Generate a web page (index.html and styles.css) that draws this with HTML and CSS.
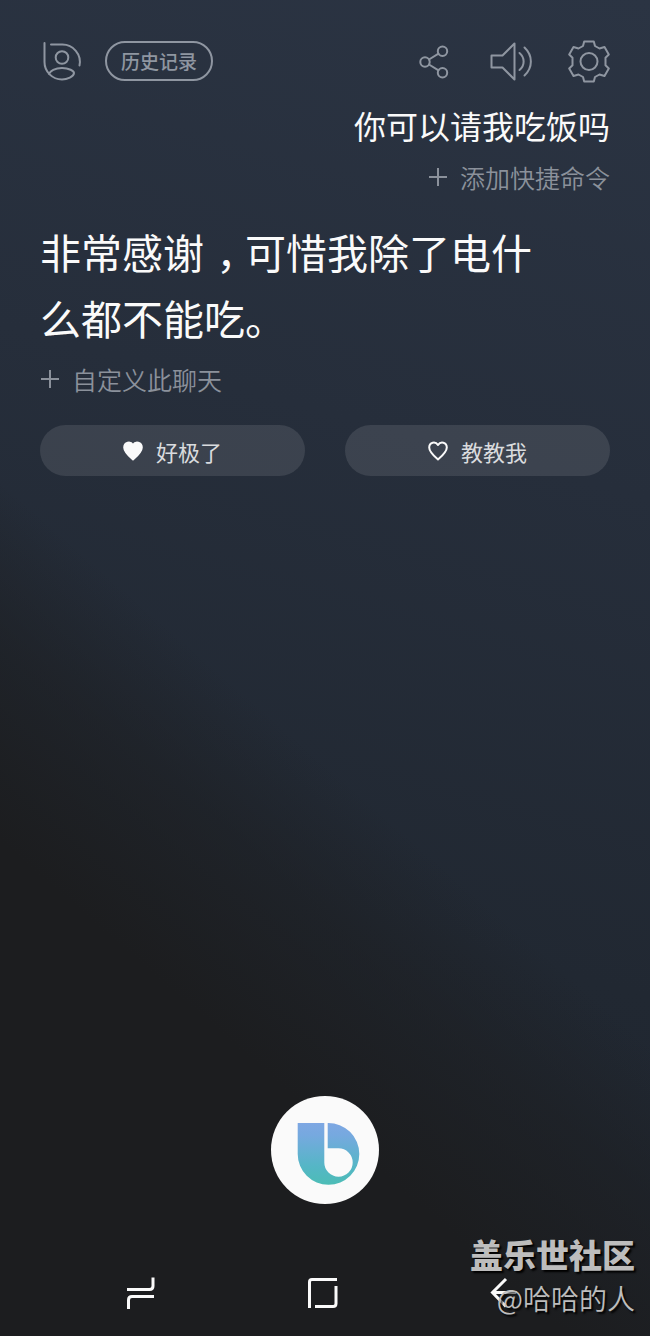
FILE: index.html
```
<!DOCTYPE html>
<html lang="zh-CN">
<head>
    <meta charset="UTF-8">
    <meta name="viewport" content="width=device-width, initial-scale=1.0">
    <title>Bixby</title>
    <link rel="stylesheet" href="styles.css">
</head>
<body>
    <div id="container">
        <header class="topBar">
            <button class="iconBtn" type="button" aria-label="个人资料">
                <svg class="icon" viewBox="0 0 44 44">
                    <path d="M4.5 4v19a17.5 17.5 0 0 0 17.5 17.5c5 0 12-3 12-6.500C34 32 29 29 22 29s-12 3-13 6"/>
                    <path d="M11 5.500h11A17.500 17.500 0 0 1 39.500 26.500"/>
                    <circle cx="22" cy="18.500" r="6.300"/>
                </svg>
            </button>
            <button class="historyBtn" type="button">历史记录</button>
            <div class="tools">
                <button class="iconBtn" type="button" aria-label="分享">
                    <svg class="icon" viewBox="0 0 44 44">
                        <circle cx="15" cy="23" r="4.700"/>
                        <circle cx="32.500" cy="12.200" r="4.700"/>
                        <circle cx="32.500" cy="33.800" r="4.700"/>
                        <path d="M19 20.500l9.500-5.800M19 25.500l9.500 5.800"/>
                    </svg>
                </button>
                <button class="iconBtn" type="button" aria-label="声音">
                    <svg class="icon" viewBox="0 0 44 44">
                        <path d="M3.500 16.500h11L26.500 4.500v36L14.500 28.500h-11z"/>
                        <path d="M31.500 14c5.500 4.500 5.500 12.500 0 17M36.500 8.500c8.500 8 8.500 20 0 28"/>
                    </svg>
                </button>
                <button class="iconBtn" type="button" aria-label="设置">
                    <svg class="icon" viewBox="-23 -22.500 44 44">
                        <path d="M-4.800-20H4.800L6-15.500L10.500-13L15.500-14.500L19.800-7L16.500-3.800V3.800L19.800 7L15.500 14.500L10.500 13L6 15.500L4.800 20H-4.800L-6 15.500L-10.500 13L-15.500 14.500L-19.800 7L-16.500 3.800V-3.800L-19.800-7L-15.500-14.500L-10.500-13L-6-15.500Z"/>
                        <circle r="8.500"/>
                    </svg>
                </button>
            </div>
        </header>

        <main class="chat">
            <p class="question">你可以请我吃饭吗</p>
            <button class="hint hintRight" type="button">
                <svg class="plus" viewBox="0 0 20 20"><path d="M1 10h18M10 1v18"/></svg>
                添加快捷命令
            </button>
            <p class="answer">非常感谢<span class="comma">，</span>可惜我除了电什么都不能吃。</p>
            <button class="hint" type="button">
                <svg class="plus" viewBox="0 0 20 20"><path d="M1 10h18M10 1v18"/></svg>
                自定义此聊天
            </button>
            <div class="feedback">
                <button class="feedbackBtn" type="button">
                    <svg class="heart filled" viewBox="0 0 20 20"><path d="M10 18.500C6 15 1.200 11 1.200 6.500C1.200 1 7.500 0 10 4C12.500 0 18.800 1 18.800 6.500C18.800 11 14 15 10 18.500z"/></svg>
                    好极了
                </button>
                <button class="feedbackBtn" type="button">
                    <svg class="heart" viewBox="0 0 20 20"><path d="M10 18.500C6 15 1.200 11 1.200 6.500C1.200 1 7.500 0 10 4C12.500 0 18.800 1 18.800 6.500C18.800 11 14 15 10 18.500z"/></svg>
                    教教我
                </button>
            </div>
        </main>

        <button class="bixbyBtn" type="button" aria-label="Bixby">
            <svg viewBox="0 0 108 108">
                <defs>
                    <linearGradient id="bixbyFill" x1="0" y1="0" x2="0" y2="1">
                        <stop offset="0" stop-color="#7ea7e3"/>
                        <stop offset="0.200" stop-color="#76a9df"/>
                        <stop offset="0.700" stop-color="#55b6c6"/>
                        <stop offset="1" stop-color="#4cbdb6"/>
                    </linearGradient>
                </defs>
                <path fill="url(#bixbyFill)" d="M26.700 27H53.300V66.500A14.200 14.200 0 1 0 67.500 52.300H56.700V27A31 31 0 0 1 88.300 58A30.800 30.800 0 0 1 26.700 58Z"/>
            </svg>
        </button>

        <nav class="navBar">
            <button class="iconBtn" type="button" aria-label="最近">
                <svg class="navIcon" viewBox="0 0 44 44">
                    <path d="M8 18.500h22.500q3.500 0 3.500-3.500V6.500M9.500 38v-9q0-3.500 3.500-3.500h22"/>
                </svg>
            </button>
            <button class="iconBtn" type="button" aria-label="主页">
                <svg class="navIcon" viewBox="0 0 44 44">
                    <path d="M6.500 37V11q0-2.500 2.500-2.500h25M33 15v17.500q0 3-3 3H12"/>
                </svg>
            </button>
            <button class="iconBtn" type="button" aria-label="返回">
                <svg class="navIcon" viewBox="0 0 44 44">
                    <path d="M19 8L5.500 21.500L19 35.500M5.500 21.500h24"/>
                </svg>
            </button>
        </nav>

        <div class="watermark">
            <p class="siteName">盖乐世社区</p>
            <p class="userName">@哈哈的人</p>
        </div>
    </div>
</body>
</html>
```
FILE: styles.css
```
body{
    margin: 0;
    font-family: "Noto Sans CJK SC", sans-serif;
    color: #fafafa;
    background-color: #1c1d1f;
}

p{
    margin: 0;
}

button{
    padding: 0;
    border: none;
    background: none;
    font-family: inherit;
    color: inherit;
    cursor: pointer;
}

svg{
    display: block;
    fill: none;
}

#container{
    position: relative;
    box-sizing: border-box;
    min-height: 100vh;
    display: flex;
    flex-direction: column;
    padding: 39px 0 21px;
    background-image:
        linear-gradient(221deg, rgba(28, 29, 31, 0) 55%, rgba(28, 29, 31, 0.5) 63%, #1c1d1f 74%),
        linear-gradient(195deg, #2b3443 0%, #262e3b 33%, #212832 66%, #1e242d 100%);
}

.topBar{
    display: flex;
    align-items: center;
    padding: 0 40px;
}

.icon{
    width: 44px;
    height: 44px;
    stroke: #8f96a1;
    stroke-width: 2;
    stroke-linecap: round;
    stroke-linejoin: round;
}

.historyBtn{
    height: 40px;
    margin-left: 21px;
    padding: 0 14px;
    border: 2px solid #8f96a1;
    border-radius: 20px;
    font-size: 19px;
    font-weight: 500;
    line-height: 36px;
    color: #8f96a1;
}

.tools{
    display: flex;
    gap: 34px;
    margin-left: auto;
}

.chat{
    display: flex;
    flex-direction: column;
    align-items: flex-start;
    padding: 19px 40px 0;
}

.question{
    align-self: flex-end;
    font-size: 32px;
    line-height: 46px;
}

.hint{
    display: flex;
    align-items: center;
    gap: 12px;
    margin-top: 11px;
    font-size: 25px;
    font-weight: 350;
    line-height: 36px;
    color: #8b919b;
}

.hintRight{
    align-self: flex-end;
}

.plus{
    width: 20px;
    height: 20px;
    stroke: #8b919b;
    stroke-width: 2;
}

.answer{
    max-width: 510px;
    margin-top: 23px;
    font-size: 41px;
    line-height: 66px;
}

/* half-width glyph padded back to a full cell */
.comma{
    padding: 0 0.2em 0 0.3em;
    font-feature-settings: "halt";
}

.feedback{
    align-self: stretch;
    display: flex;
    gap: 40px;
    margin-top: 28px;
}

.feedbackBtn{
    flex: 1;
    display: flex;
    align-items: center;
    justify-content: center;
    gap: 13px;
    height: 51px;
    border-radius: 26px;
    background-color: rgba(255, 255, 255, 0.1);
    font-size: 22px;
    color: #d9dbde;
}

.heart{
    width: 20px;
    height: 20px;
    stroke: #fafafa;
    stroke-width: 2;
    stroke-linejoin: round;
}

.filled{
    fill: #fafafa;
}

.bixbyBtn{
    width: 108px;
    height: 108px;
    margin: auto auto 67px;
    border-radius: 50%;
    background-color: #fafafa;
}

.navBar{
    display: flex;
    justify-content: space-between;
    padding: 0 119px;
}

.navIcon{
    width: 44px;
    height: 44px;
    stroke: #fafafa;
    stroke-width: 3;
}

/* forum stamp, sits over the nav bar */
.watermark{
    position: absolute;
    right: 15px;
    bottom: 16px;
    text-align: right;
    color: #bdbdbd;
    text-shadow: 2px 2px 2px #000;
}

.siteName{
    font-size: 33px;
    font-weight: 900;
    line-height: 44px;
}

.userName{
    font-size: 28px;
    font-weight: 350;
    line-height: 44px;
}
```
